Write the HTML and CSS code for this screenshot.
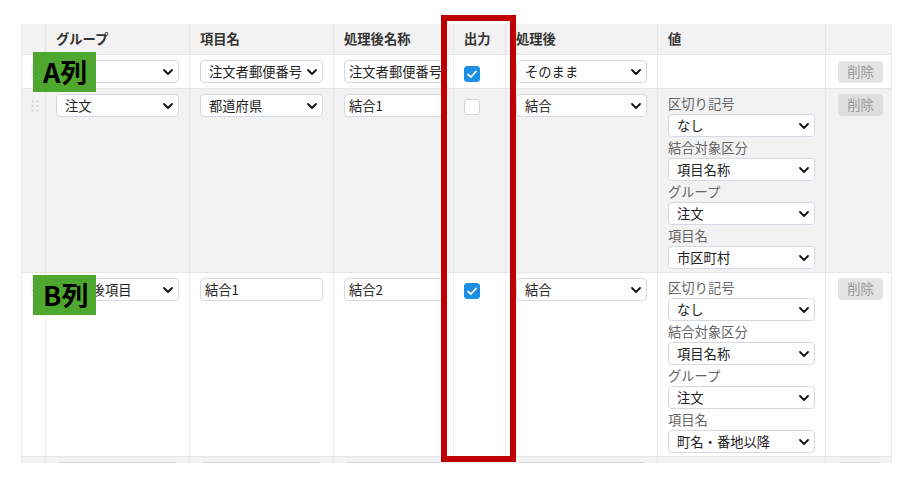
FILE: index.html
```html
<!DOCTYPE html>
<html lang="ja">
<head>
<meta charset="utf-8">
<link rel="stylesheet" href="styles.css">
</head>
<body>
<div class="page">
  <div class="table">
    <div class="row head">
      <div class="cell"></div>
      <div class="cell">グループ</div>
      <div class="cell">項目名</div>
      <div class="cell">処理後名称</div>
      <div class="cell">出力</div>
      <div class="cell">処理後</div>
      <div class="cell">値</div>
      <div class="cell"></div>
    </div>

    <div class="row">
      <div class="cell handle-cell"><svg class="handle" width="8" height="12" viewBox="0 0 8 12"><circle cx="1.5" cy="1.5" r="1"/><circle cx="6.5" cy="1.5" r="1"/><circle cx="1.5" cy="6" r="1"/><circle cx="6.5" cy="6" r="1"/><circle cx="1.5" cy="10.5" r="1"/><circle cx="6.5" cy="10.5" r="1"/></svg></div>
      <div class="cell"><div class="select"><span></span><svg class="chev" width="10" height="6" viewBox="0 0 10 6"><polyline points="1,1 5,5 9,1"/></svg></div></div>
      <div class="cell"><div class="select"><span>注文者郵便番号</span><svg class="chev" width="10" height="6" viewBox="0 0 10 6"><polyline points="1,1 5,5 9,1"/></svg></div></div>
      <div class="cell"><div class="input">注文者郵便番号</div></div>
      <div class="cell"><div class="check on"><svg width="16" height="16" viewBox="0 0 16 16"><polyline points="4,8.5 7,11 12,5.5"/></svg></div></div>
      <div class="cell"><div class="select"><span>そのまま</span><svg class="chev" width="10" height="6" viewBox="0 0 10 6"><polyline points="1,1 5,5 9,1"/></svg></div></div>
      <div class="cell"></div>
      <div class="cell"><div class="btn first">削除</div></div>
    </div>

    <div class="row alt">
      <div class="cell handle-cell"><svg class="handle" width="8" height="12" viewBox="0 0 8 12"><circle cx="1.5" cy="1.5" r="1"/><circle cx="6.5" cy="1.5" r="1"/><circle cx="1.5" cy="6" r="1"/><circle cx="6.5" cy="6" r="1"/><circle cx="1.5" cy="10.5" r="1"/><circle cx="6.5" cy="10.5" r="1"/></svg></div>
      <div class="cell"><div class="select"><span>注文</span><svg class="chev" width="10" height="6" viewBox="0 0 10 6"><polyline points="1,1 5,5 9,1"/></svg></div></div>
      <div class="cell"><div class="select"><span>都道府県</span><svg class="chev" width="10" height="6" viewBox="0 0 10 6"><polyline points="1,1 5,5 9,1"/></svg></div></div>
      <div class="cell"><div class="input">結合1</div></div>
      <div class="cell"><div class="check"></div></div>
      <div class="cell"><div class="select"><span>結合</span><svg class="chev" width="10" height="6" viewBox="0 0 10 6"><polyline points="1,1 5,5 9,1"/></svg></div></div>
      <div class="cell values">
        <div class="label">区切り記号</div>
        <div class="select"><span>なし</span><svg class="chev" width="10" height="6" viewBox="0 0 10 6"><polyline points="1,1 5,5 9,1"/></svg></div>
        <div class="label">結合対象区分</div>
        <div class="select"><span>項目名称</span><svg class="chev" width="10" height="6" viewBox="0 0 10 6"><polyline points="1,1 5,5 9,1"/></svg></div>
        <div class="label">グループ</div>
        <div class="select"><span>注文</span><svg class="chev" width="10" height="6" viewBox="0 0 10 6"><polyline points="1,1 5,5 9,1"/></svg></div>
        <div class="label">項目名</div>
        <div class="select"><span>市区町村</span><svg class="chev" width="10" height="6" viewBox="0 0 10 6"><polyline points="1,1 5,5 9,1"/></svg></div>
      </div>
      <div class="cell"><div class="btn">削除</div></div>
    </div>

    <div class="row">
      <div class="cell handle-cell"><svg class="handle" width="8" height="12" viewBox="0 0 8 12"><circle cx="1.5" cy="1.5" r="1"/><circle cx="6.5" cy="1.5" r="1"/><circle cx="1.5" cy="6" r="1"/><circle cx="6.5" cy="6" r="1"/><circle cx="1.5" cy="10.5" r="1"/><circle cx="6.5" cy="10.5" r="1"/></svg></div>
      <div class="cell"><div class="select"><span>処理後項目</span><svg class="chev" width="10" height="6" viewBox="0 0 10 6"><polyline points="1,1 5,5 9,1"/></svg></div></div>
      <div class="cell"><div class="input">結合1</div></div>
      <div class="cell"><div class="input">結合2</div></div>
      <div class="cell"><div class="check on"><svg width="16" height="16" viewBox="0 0 16 16"><polyline points="4,8.5 7,11 12,5.5"/></svg></div></div>
      <div class="cell"><div class="select"><span>結合</span><svg class="chev" width="10" height="6" viewBox="0 0 10 6"><polyline points="1,1 5,5 9,1"/></svg></div></div>
      <div class="cell values">
        <div class="label">区切り記号</div>
        <div class="select"><span>なし</span><svg class="chev" width="10" height="6" viewBox="0 0 10 6"><polyline points="1,1 5,5 9,1"/></svg></div>
        <div class="label">結合対象区分</div>
        <div class="select"><span>項目名称</span><svg class="chev" width="10" height="6" viewBox="0 0 10 6"><polyline points="1,1 5,5 9,1"/></svg></div>
        <div class="label">グループ</div>
        <div class="select"><span>注文</span><svg class="chev" width="10" height="6" viewBox="0 0 10 6"><polyline points="1,1 5,5 9,1"/></svg></div>
        <div class="label">項目名</div>
        <div class="select"><span>町名・番地以降</span><svg class="chev" width="10" height="6" viewBox="0 0 10 6"><polyline points="1,1 5,5 9,1"/></svg></div>
      </div>
      <div class="cell"><div class="btn">削除</div></div>
    </div>

    <div class="row alt">
      <div class="cell handle-cell"></div>
      <div class="cell"><div class="select"></div></div>
      <div class="cell"><div class="select"></div></div>
      <div class="cell"><div class="input"></div></div>
      <div class="cell"></div>
      <div class="cell"><div class="select"></div></div>
      <div class="cell"></div>
      <div class="cell"><div class="btn"></div></div>
    </div>
  </div>

  <div class="tag tag-a">A列</div>
  <div class="tag tag-b">B列</div>
  <div class="frame"></div>
</div>
</body>
</html>
```

FILE: styles.css
```css
html, body {
  margin: 0;
  padding: 0;
  background: #ffffff;
}

body {
  font-family: "Noto Sans CJK JP", "Noto Sans", sans-serif;
  font-size: 13.3px;
  color: #222;
}

.page {
  position: relative;
  width: 911px;
  height: 477px;
  padding: 24px 0 0 21px;
  box-sizing: border-box;
}

.table {
  width: 871px;
  height: 439px;
  overflow: hidden;
  border-left: 1px solid #ececec;
  border-right: 1px solid #ececec;
  box-sizing: border-box;
}

.row {
  display: grid;
  grid-template-columns: 23px 144px 144px 120px 52px 152px 168px 66px;
  border-bottom: 1px solid #e6e6e6;
  background: #ffffff;
}

.row.alt {
  background: #f2f2f2;
}

.row.head {
  background: #f2f2f2;
  height: 31px;
  box-sizing: border-box;
}

.cell {
  padding: 5px 10px 5px 10px;
  border-left: 1px solid #ededed;
  min-width: 0;
}

.cell:first-child {
  border-left: none;
  padding: 0;
}

.row.alt .cell {
  border-left-color: #e7e7e7;
}

.head .cell {
  padding: 0 10px;
  line-height: 30px;
  font-weight: 700;
  color: #333;
  border-left-color: #e4e4e4;
}

.handle-cell {
  display: flex;
  justify-content: center;
  align-items: flex-start;
}

.handle {
  margin-top: 11px;
  margin-left: 3px;
  fill: #cfcfcf;
}

.select {
  height: 23px;
  box-sizing: border-box;
  border: 1px solid #d3dae4;
  border-radius: 4px;
  background: #fff;
  display: flex;
  align-items: center;
  justify-content: space-between;
  padding: 0 5px 0 8px;
  overflow: hidden;
  white-space: nowrap;
  line-height: 21px;
}

.select span {
  overflow: hidden;
}

.chev {
  flex: none;
  fill: none;
  stroke: #111;
  stroke-width: 1.8;
  stroke-linecap: round;
  stroke-linejoin: round;
}

.input {
  height: 23px;
  box-sizing: border-box;
  border: 1px solid #d3dae4;
  border-radius: 4px;
  background: #fff;
  padding: 0 4px;
  line-height: 21px;
  white-space: nowrap;
  overflow: hidden;
}

.check {
  width: 16px;
  height: 16px;
  box-sizing: border-box;
  margin: 5px 0 0 0;
  border: 1px solid #d6d6d6;
  border-radius: 3px;
  background: #fff;
}

.row:not(.alt) .check {
  margin-top: 6px;
}

.row + .row + .row + .row .check {
  margin-top: 5px;
}

.check.on {
  background: #1a8fe3;
  border-color: #1a8fe3;
}

.check svg {
  display: block;
  margin: -1px;
  fill: none;
  stroke: #fff;
  stroke-width: 1.8;
  stroke-linecap: round;
  stroke-linejoin: round;
}

.values {
  padding-top: 4px;
  padding-bottom: 3px;
}

.label {
  line-height: 21px;
  height: 21px;
  color: #666;
}

.btn {
  width: 45px;
  height: 22px;
  margin-left: 2px;
  border-radius: 4px;
  background: #e3e3e3;
  color: #999;
  text-align: center;
  line-height: 22px;
}

.row.alt .btn {
  background: #dedede;
}

.btn.first {
  margin-top: 1px;
}

.tag {
  position: absolute;
  left: 33px;
  width: 63px;
  height: 40px;
  background: #4ea72e;
  color: #000;
  font-size: 27px;
  font-weight: 700;
  line-height: 40px;
  box-sizing: border-box;
  padding-left: 10px;
}

.tag-a {
  top: 52px;
}

.tag-b {
  top: 275px;
}

.frame {
  position: absolute;
  left: 441px;
  top: 15px;
  width: 75px;
  height: 447px;
  border: 6px solid #c00000;
  box-sizing: border-box;
}
```
